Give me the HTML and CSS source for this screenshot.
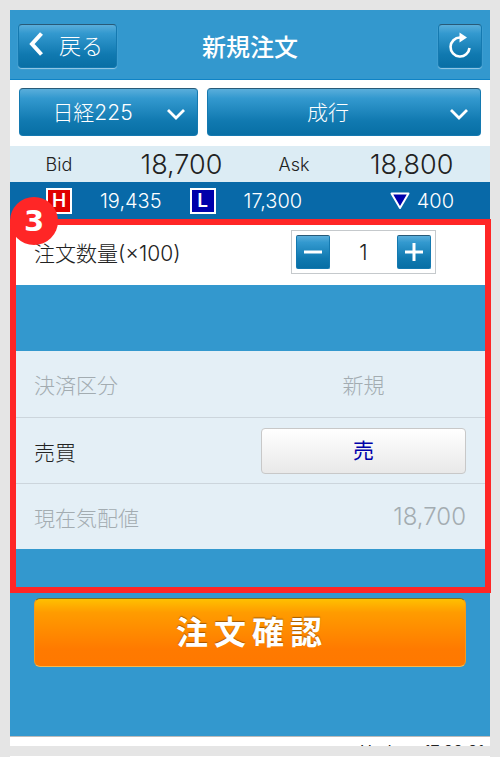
FILE: index.html
```
<!DOCTYPE html>
<html lang="ja">
<head>
    <meta charset="UTF-8">
    <meta name="viewport" content="width=device-width, initial-scale=1.0">
    <title>新規注文</title>
    <link rel="stylesheet" href="styles.css">
</head>
<body>
    <div class="screen">
        <header class="header">
            <button type="button" class="blue-button back">
                <svg width="14" height="24" viewBox="0 0 14 24"><path d="M12.500 1.500 L3 12 L12.500 22.500" fill="none" stroke="#fff" stroke-width="4"/></svg>
                戻る
            </button>
            <h1>新規注文</h1>
            <button type="button" class="blue-button reload" aria-label="更新">
                <svg width="24" height="28" viewBox="0 0 24 28">
                    <path d="M12 5.500 A9.500 9.500 0 1 0 21.500 16" fill="none" stroke="#fff" stroke-width="2.600"/>
                    <path d="M11.500 0.500 L19 5.500 L11.500 10.500 Z" fill="#fff"/>
                </svg>
            </button>
        </header>

        <div class="selectors">
            <div class="picker product">
                <select class="blue-button" aria-label="銘柄">
                    <option>日経225</option>
                </select>
                <svg class="chevron" width="20" height="12" viewBox="0 0 20 12"><path d="M2 2 L10 10 L18 2" fill="none" stroke="#fff" stroke-width="2.800"/></svg>
            </div>
            <div class="picker method">
                <select class="blue-button" aria-label="注文方法">
                    <option>成行</option>
                </select>
                <svg class="chevron" width="20" height="12" viewBox="0 0 20 12"><path d="M2 2 L10 10 L18 2" fill="none" stroke="#fff" stroke-width="2.800"/></svg>
            </div>
        </div>

        <div class="quotes">
            <span class="quote-label">Bid</span>
            <span class="quote-price">18,700</span>
            <span class="quote-label">Ask</span>
            <span class="quote-price">18,800</span>
        </div>

        <div class="range">
            <span class="mark high">H</span>
            <span>19,435</span>
            <span class="mark low">L</span>
            <span>17,300</span>
            <span class="change">
                <svg width="20" height="18" viewBox="0 0 20 18"><path d="M1.500 1.500 H18.500 L10 16 Z" fill="#0000aa" stroke="#fff" stroke-width="2" stroke-linejoin="round"/></svg>
                400
            </span>
        </div>

        <form class="order">
            <!-- Step 3: everything inside the red frame -->
            <section class="step">
                <span class="step-number">3</span>
                <div class="row quantity">
                    <label for="quantity">注文数量(×100)</label>
                    <div class="stepper">
                        <button type="button" class="blue-button" aria-label="減らす">
                            <svg width="18" height="18" viewBox="0 0 18 18"><path d="M0 9 H18" stroke="#fff" stroke-width="3"/></svg>
                        </button>
                        <input type="text" id="quantity" value="1" inputmode="numeric">
                        <button type="button" class="blue-button" aria-label="増やす">
                            <svg width="18" height="18" viewBox="0 0 18 18"><path d="M0 9 H18 M9 0 V18" stroke="#fff" stroke-width="3"/></svg>
                        </button>
                    </div>
                </div>
                <div class="details">
                    <div class="row disabled">
                        <label for="kind">決済区分</label>
                        <output id="kind">新規</output>
                    </div>
                    <div class="row">
                        <label for="side">売買</label>
                        <button type="button" class="side" id="side">売</button>
                    </div>
                    <div class="row disabled">
                        <label for="price">現在気配値</label>
                        <output id="price" class="price">18,700</output>
                    </div>
                </div>
            </section>
            <button type="submit" class="confirm">注文確認</button>
        </form>

        <footer class="updated">Update: 17:22:21</footer>
    </div>
    <div class="screen next"></div>
</body>
</html>
```

FILE: styles.css
```
* {
    box-sizing: border-box;
}

body {
    margin: 0;
    padding: 10px 10px 0;
    background-color: #e5e5e5;
    color: #222;
    font-family: Inter, "Noto Sans CJK JP", sans-serif;
    font-size: 21px;
    font-weight: 300;
}

button,
input,
select {
    margin: 0;
    font: inherit;
}

svg {
    display: block;
    flex: none;
}

.screen {
    background-color: #fff;
}

/* Shared look of the glossy blue controls */
.blue-button {
    display: flex;
    align-items: center;
    justify-content: center;
    padding: 0;
    border: 1px solid #1479b0;
    border-top-color: #285a78;
    border-radius: 4px;
    background: linear-gradient(#5aaedb, #3399cf 20%, #1079b0 70%, #086fa5);
    box-shadow: 0 1px 1px rgba(255, 255, 255, 0.5);
    color: #fff;
}

.header {
    display: grid;
    grid-template-columns: 1fr auto 1fr;
    align-items: center;
    height: 70px;
    padding: 2px 8px 0;
    background-color: #3398ce;
    border-bottom: 1px solid #0f83c6;
}

.header h1 {
    margin: 0;
    color: #fff;
    font-size: 24px;
    font-weight: 500;
}

.back {
    justify-self: start;
    gap: 16px;
    height: 44px;
    padding: 0 13px 3px 10px;
    font-size: 22px;
}

.reload {
    justify-self: end;
    width: 44px;
    height: 44px;
}

.selectors {
    display: flex;
    gap: 9px;
    padding: 8px 9px 10px;
}

.picker {
    position: relative;
}

.product {
    flex: 179;
}

.method {
    flex: 274;
}

.picker select {
    width: 100%;
    height: 48px;
    padding: 0 32px 0 0;
    appearance: none;
    text-align: center;
    text-align-last: center;
}

.chevron {
    position: absolute;
    top: 20px;
    right: 12px;
    pointer-events: none;
}

.quotes {
    display: grid;
    grid-template-columns: 10fr 15fr 8fr 16fr;
    align-items: center;
    height: 36px;
    background-color: #dcecf4;
    text-align: center;
}

.quote-label {
    font-size: 18px;
}

.quote-price {
    font-size: 27px;
}

.range {
    display: flex;
    align-items: center;
    height: 37px;
    padding: 0 36px;
    background-color: #0869a8;
    color: #fff;
    font-size: 20px;
}

.range span + span {
    margin-left: 28px;
}

.mark {
    width: 26px;
    height: 26px;
    border: 2px solid #fff;
    font-size: 19px;
    font-weight: 600;
    line-height: 22px;
    text-align: center;
}

.high {
    background-color: #e00000;
}

.low {
    background-color: #0000aa;
}

.range .change {
    display: flex;
    align-items: center;
    gap: 7px;
    margin-left: auto;
}

.order {
    padding-bottom: 69px;
    background-color: #3398ce;
    border-bottom: 1px solid #bbb;
}

.step {
    position: relative;
    padding-bottom: 44px;
    margin-bottom: 5px;
}

/* Red frame around the highlighted step */
.step::after {
    content: "";
    position: absolute;
    inset: 0 -1px 0 0;
    border: 6px solid #ff2626;
    pointer-events: none;
}

.step-number {
    position: absolute;
    top: -22px;
    left: 0;
    z-index: 1;
    width: 48px;
    height: 48px;
    border-radius: 50%;
    background-color: #ff2626;
    color: #fff;
    font-family: "DejaVu Sans", sans-serif;
    font-size: 29px;
    font-weight: bold;
    line-height: 48px;
    text-align: center;
}

.row {
    display: grid;
    grid-template-columns: 1fr 47.5%;
    align-items: center;
    justify-items: center;
    height: 66px;
    padding: 0 24px;
}

.row label {
    justify-self: start;
}

.quantity {
    margin-bottom: 66px;
    background-color: #fff;
}

.details {
    background-color: #e4eff6;
}

.details .row + .row {
    border-top: 1px solid #ccd5dc;
}

.disabled {
    color: #a3acb1;
}

.stepper {
    display: flex;
    align-items: center;
    padding: 4px;
    border: 1px solid #c5c9cc;
}

.stepper button {
    width: 34px;
    height: 34px;
    border-radius: 2px;
}

.stepper input {
    width: 67px;
    padding: 0;
    border: 0;
    background: none;
    color: inherit;
    text-align: center;
}

.side {
    width: 100%;
    height: 46px;
    padding: 0 0 3px;
    border: 1px solid #c8c8c8;
    border-radius: 4px;
    background: linear-gradient(#fff, #e9e9e9);
    color: #0000aa;
    font-weight: 400;
}

.price {
    justify-self: end;
    font-size: 24px;
}

.confirm {
    display: block;
    width: calc(100% - 48px);
    height: 69px;
    margin: 0 auto;
    padding: 0 0 6px 4px;
    border: 1px solid #f29a20;
    border-top-color: #7c6a2c;
    border-bottom-color: #f8b84c;
    border-radius: 6px;
    background: linear-gradient(#ffc000, #ff9c00 20%, #ff7a00 75%, #ff7800);
    color: #fff;
    font-size: 32px;
    font-weight: bold;
    letter-spacing: 6px;
    text-shadow: 0 -1px 1px rgba(100, 50, 0, 0.6);
}

/* Only the top edge of the footer line shows */
.updated {
    height: 9px;
    padding: 4px 6px 0;
    overflow: hidden;
    font-size: 16px;
    font-weight: 400;
    text-align: right;
}

.next {
    height: 1px;
    margin-top: 10px;
}
```
